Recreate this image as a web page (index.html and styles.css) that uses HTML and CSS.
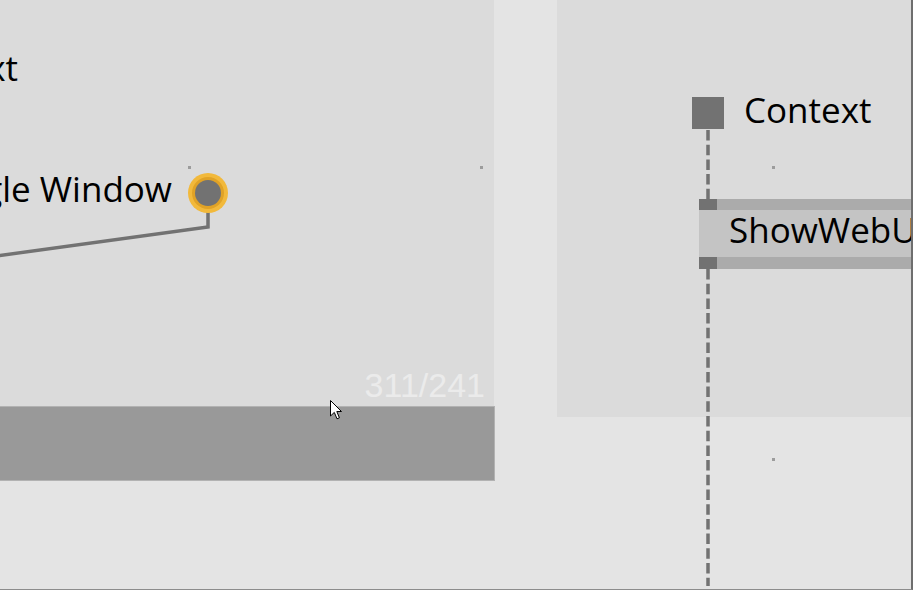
FILE: index.html
```html
<!DOCTYPE html>
<html lang="en">
<head>
    <meta charset="UTF-8">
    <meta name="viewport" content="width=device-width, initial-scale=1.0">
    <title>Patch Editor</title>
    <link rel="stylesheet" href="styles.css">
</head>
<body>
    <div class="canvas">
        <!-- region panels -->
        <div class="panel panel-left">
            <span class="label label-context">Context</span>
            <span class="label label-window">Toggle Window</span>
            <span class="coords">311/241</span>
        </div>
        <div class="status-bar"></div>
        <div class="panel panel-right"></div>

        <!-- grid dots -->
        <span class="dot dot-a"></span>
        <span class="dot dot-b"></span>
        <span class="dot dot-c"></span>
        <span class="dot dot-d"></span>

        <!-- wires -->
        <svg class="wires" width="913" height="590" viewBox="0 0 913 590">
            <polyline points="208,212 208,227 -4,256" fill="none" stroke="#727272" stroke-width="3.5" stroke-linejoin="miter"/>
            <line x1="708" y1="130" x2="708" y2="199" stroke="#727272" stroke-width="3.5" stroke-dasharray="10.5 4.2"/>
            <line x1="708" y1="269" x2="708" y2="586" stroke="#727272" stroke-width="3.5" stroke-dasharray="10.5 4.2"/>
            <circle cx="208" cy="193" r="20" fill="#f2b93b"/>
            <circle cx="208" cy="193" r="16" fill="#e0a226"/>
            <circle cx="208" cy="193" r="13" fill="#727272"/>
        </svg>

        <!-- input pin -->
        <div class="io-pin">
            <span class="pin-square"></span>
            <span class="label">Context</span>
        </div>

        <!-- node -->
        <div class="node">
            <div class="node-bar"><span class="node-pin"></span></div>
            <div class="node-body">ShowWebUI</div>
            <div class="node-bar node-bar-bottom"><span class="node-pin"></span></div>
        </div>

        <svg class="cursor" width="13" height="21" viewBox="0 0 13 21">
            <path d="M0.5,0.5 L0.5,16 L4.3,12.4 L7,18.8 L9.4,17.8 L6.8,11.5 L11.5,11.5 Z" fill="#fff" stroke="#000" stroke-width="1"/>
        </svg>

        <div class="frame"></div>
    </div>
</body>
</html>
```

FILE: styles.css
```css
body {
    margin: 0;
    padding: 0;
    background-color: #e4e4e4;
    font-family: "Open Sans", "Noto Sans", sans-serif;
    overflow: hidden;
}

.canvas {
    position: relative;
    width: 913px;
    height: 590px;
    overflow: hidden;
}

.panel {
    position: absolute;
    background-color: #dbdbdb;
}

.panel-left {
    left: 0;
    top: 0;
    width: 494px;
    height: 407px;
}

.panel-right {
    left: 557px;
    top: 0;
    width: 356px;
    height: 417px;
}

.status-bar {
    position: absolute;
    left: -1px;
    top: 406px;
    width: 494px;
    height: 73px;
    background-color: #999999;
    border: 1px solid #b2b2b2;
}

.label {
    font-size: 35px;
    line-height: 1;
    color: #000;
    white-space: nowrap;
}

.panel .label {
    position: absolute;
}

.label-context {
    right: 476px;
    top: 50px;
}

.label-window {
    right: 322px;
    top: 171px;
}

.coords {
    position: absolute;
    right: 9px;
    top: 368px;
    font-family: "Liberation Sans", Arial, sans-serif;
    font-size: 34px;
    line-height: 1;
    color: #ebebeb;
}

.dot {
    position: absolute;
    width: 3px;
    height: 3px;
    background-color: #9c9c9c;
}

.dot-a { left: 188px; top: 166px; }
.dot-b { left: 480px; top: 166px; }
.dot-c { left: 772px; top: 166px; }
.dot-d { left: 772px; top: 458px; }

.wires {
    position: absolute;
    left: 0;
    top: 0;
}

.io-pin {
    position: absolute;
    left: 692px;
    top: 97px;
    display: flex;
    align-items: flex-start;
    gap: 20px;
}

.pin-square {
    width: 32px;
    height: 32px;
    background-color: #727272;
}

.io-pin .label {
    margin-top: -5px;
}

.node {
    position: absolute;
    left: 699px;
    top: 199px;
    width: 260px;
    display: flex;
    flex-direction: column;
}

.node-bar {
    height: 11px;
    background-color: #ababab;
    display: flex;
}

.node-bar-bottom {
    height: 12px;
}

.node-pin {
    width: 18px;
    background-color: #727272;
}

.node-body {
    height: 47px;
    box-sizing: border-box;
    padding: 2px 0 0 30px;
    background-color: #c4c4c4;
    font-size: 35px;
    line-height: 1;
    color: #000;
    white-space: nowrap;
}

.cursor {
    position: absolute;
    left: 330px;
    top: 400px;
}

.frame {
    position: absolute;
    left: 0;
    top: 0;
    width: 911px;
    height: 589px;
    border-right: 2px solid #6e6e6e;
    border-bottom: 1px solid #8c8c8c;
    pointer-events: none;
}
```
